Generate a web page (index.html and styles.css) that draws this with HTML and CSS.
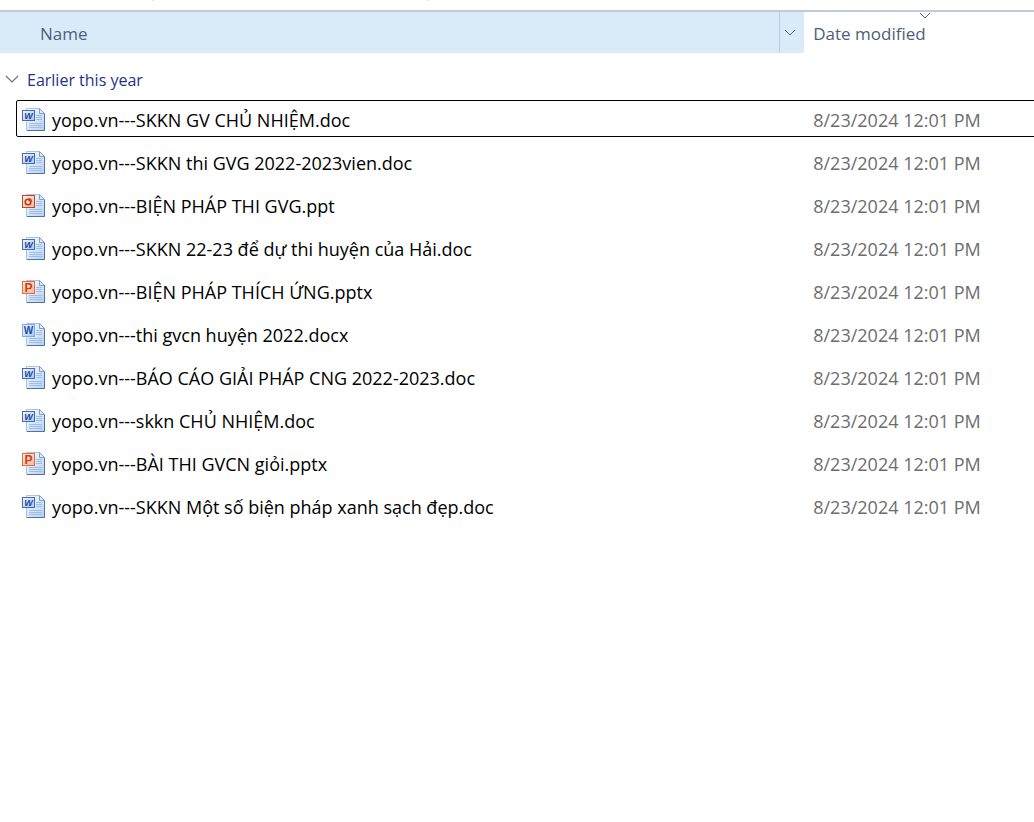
FILE: index.html
```html
<!DOCTYPE html>
<html lang="en">
<head>
<meta charset="utf-8">
<title>Files</title>
<link rel="stylesheet" href="styles.css">
</head>
<body>
<svg class="defs" aria-hidden="true">
  <defs>
    <linearGradient id="paper" x1="0" y1="0" x2="1" y2="1"><stop offset="0" stop-color="#fff"/><stop offset="1" stop-color="#b4cff1"/></linearGradient>
    <linearGradient id="blue" x1="0" y1="0" x2="1" y2="1"><stop offset="0" stop-color="#f2f7fe"/><stop offset="1" stop-color="#a9c4ee"/></linearGradient>
    <linearGradient id="orange" x1="0" y1="0" x2="1" y2="1"><stop offset="0" stop-color="#fff3ea"/><stop offset="1" stop-color="#f7b496"/></linearGradient>
    <symbol id="page" viewBox="0 0 24 24">
      <path d="M4.500.5H17.500L22.500 5.500V22.500H4.500Z" fill="url(#paper)" stroke="#a9c3e5"/>
      <path d="M22.500 5.500V22.500H5" fill="none" stroke="#4d72a8"/>
      <path d="M17.500.5V5.500H22.500Z" fill="#e3edf9" stroke="#7f9fc8"/>
      <path d="M14 7.500H20M14 9.500H20M14 11.500H20M7 15.500H20M7 17.500H20M7 19.500H20" stroke="#9fbde6"/>
    </symbol>
    <symbol id="doc" viewBox="0 0 24 24">
      <use href="#page"/>
      <rect x=".5" y="2.500" width="12" height="10" fill="url(#blue)" stroke="#3f6cbb"/>
      <text class="glyph glyph-doc" x="6.500" y="11" text-anchor="middle">W</text>
    </symbol>
    <symbol id="docx" viewBox="0 0 24 24">
      <use href="#page"/>
      <rect x=".5" y="1.500" width="12" height="12" fill="url(#blue)" stroke="#7fabe4"/>
      <text class="glyph glyph-docx" x="6.500" y="11" text-anchor="middle">W</text>
    </symbol>
    <symbol id="ppt" viewBox="0 0 24 24">
      <use href="#page"/>
      <rect x=".5" y="1.500" width="12" height="12" fill="url(#orange)" stroke="#b8492c"/>
      <circle cx="6" cy="8" r="2.800" fill="#fbd9c8" stroke="#b93a1b" stroke-width="1.600"/>
      <path d="M6.500 7.500V4A3.500 3.500 0 0 1 10 7.500Z" fill="#c9441f"/>
    </symbol>
    <symbol id="pptx" viewBox="0 0 24 24">
      <use href="#page"/>
      <rect x=".5" y="1.500" width="12" height="12" fill="url(#orange)" stroke="#ea6a3c"/>
      <text class="glyph glyph-pptx" x="6.500" y="11.500" text-anchor="middle">P</text>
    </symbol>
  </defs>
</svg>
<div class="toolbar-edge"><span class="tick"></span><span class="tick"></span></div>
<table class="files">
  <thead>
    <tr class="header">
      <th class="name-head" scope="col">
        <span class="name-label">Name</span>
        <button class="filter" aria-label="Filter by name"><svg width="12" height="7" viewBox="0 0 12 7"><path d="M1 1L6 6L11 1"/></svg></button>
      </th>
      <th class="date-head" scope="col">Date modified
        <svg class="sort" width="12" height="7" viewBox="0 0 12 7"><path d="M1 1L6 6L11 1"/></svg>
      </th>
    </tr>
  </thead>
  <tbody>
    <tr class="group"><th colspan="2" scope="rowgroup"><button class="group-toggle"><svg width="14" height="8" viewBox="0 0 14 8"><path d="M1 1L7 7L13 1"/></svg>Earlier this year</button></th></tr>
    <tr class="row focused"><td class="name"><svg class="icon"><use href="#doc"/></svg>yopo.vn---SKKN GV CHỦ NHIỆM.doc</td><td class="date">8/23/2024 12:01 PM</td></tr>
    <tr class="row"><td class="name"><svg class="icon"><use href="#doc"/></svg>yopo.vn---SKKN thi GVG 2022-2023vien.doc</td><td class="date">8/23/2024 12:01 PM</td></tr>
    <tr class="row"><td class="name"><svg class="icon"><use href="#ppt"/></svg>yopo.vn---BIỆN PHÁP THI GVG.ppt</td><td class="date">8/23/2024 12:01 PM</td></tr>
    <tr class="row"><td class="name"><svg class="icon"><use href="#doc"/></svg>yopo.vn---SKKN 22-23 để dự thi huyện của Hải.doc</td><td class="date">8/23/2024 12:01 PM</td></tr>
    <tr class="row"><td class="name"><svg class="icon"><use href="#pptx"/></svg>yopo.vn---BIỆN PHÁP THÍCH ỨNG.pptx</td><td class="date">8/23/2024 12:01 PM</td></tr>
    <tr class="row"><td class="name"><svg class="icon"><use href="#docx"/></svg>yopo.vn---thi gvcn huyện 2022.docx</td><td class="date">8/23/2024 12:01 PM</td></tr>
    <tr class="row"><td class="name"><svg class="icon"><use href="#doc"/></svg>yopo.vn---BÁO CÁO GIẢI PHÁP CNG 2022-2023.doc</td><td class="date">8/23/2024 12:01 PM</td></tr>
    <tr class="row"><td class="name"><svg class="icon"><use href="#doc"/></svg>yopo.vn---skkn CHỦ NHIỆM.doc</td><td class="date">8/23/2024 12:01 PM</td></tr>
    <tr class="row"><td class="name"><svg class="icon"><use href="#pptx"/></svg>yopo.vn---BÀI THI GVCN giỏi.pptx</td><td class="date">8/23/2024 12:01 PM</td></tr>
    <tr class="row"><td class="name"><svg class="icon"><use href="#doc"/></svg>yopo.vn---SKKN Một số biện pháp xanh sạch đẹp.doc</td><td class="date">8/23/2024 12:01 PM</td></tr>
  </tbody>
</table>
</body>
</html>
```
FILE: styles.css
```css
* { box-sizing: border-box; }
body {
  margin: 0;
  background: #fff;
  color: #000;
  font: 17px/24px "Open Sans", "Noto Sans", sans-serif;
  overflow-x: hidden;
}
.defs { position: absolute; width: 0; height: 0; }
.toolbar-edge {
  display: flex;
  gap: 273px;
  height: 12px;
  padding-left: 152px;
  border-bottom: 2px solid #c2cad8;
}
.tick { width: 2px; height: 1px; background: #e4e4e8; }

.files, thead, tbody { display: block; }
tr { display: grid; grid-template-columns: 7fr 2fr; }
th, td { padding: 0; font-weight: 400; text-align: left; min-width: 0; white-space: nowrap; }
button { border: 0; padding: 0; background: none; font: inherit; color: inherit; }

.header { height: 41px; color: #4c607a; }
.name-head {
  display: flex;
  align-items: stretch;
  justify-content: space-between;
  background: #d9ebf9;
  border-radius: 0 0 2px 0;
}
.name-label { padding: 10px 0 0 40px; }
.filter {
  display: grid;
  place-items: center;
  width: 25px;
  padding-right: 4px;
  border-left: 1px solid #b9cfe0;
}
.filter path, .sort path { fill: none; stroke: #5b6470; }
.date-head { position: relative; padding: 10px 0 0 9px; }
.sort { position: absolute; top: 0; left: 115px; }

.group { grid-template-columns: 1fr; height: 47px; }
.group-toggle {
  display: flex;
  align-items: center;
  gap: 8px;
  padding: 15px 0 0 5px;
  color: #1e3287;
  font-size: 16px;
}
.group-toggle svg { margin-bottom: 2px; }
.group-toggle path { fill: none; stroke: #707070; stroke-width: 1.2; }

.row {
  align-items: center;
  height: 37px;
  margin-bottom: 6px;
  position: relative;
  font-size: 18px;
}
.focused::after {
  content: "";
  position: absolute;
  inset: 0 -4px 0 16px;
  border: 1px solid #000;
  border-radius: 2px;
}
.name { display: flex; align-items: center; gap: 6px; padding: 2px 0 0 22px; }
.icon { width: 24px; height: 24px; flex: none; }
.date { padding: 2px 0 0 9px; color: #6d6d6d; }

.glyph { font-family: "Liberation Sans", sans-serif; font-weight: 700; }
.glyph-doc { font-size: 9px; font-style: italic; fill: #1f459b; }
.glyph-docx { font-size: 10px; fill: #1450a8; }
.glyph-pptx { font-size: 12px; fill: #d0400f; }
```
